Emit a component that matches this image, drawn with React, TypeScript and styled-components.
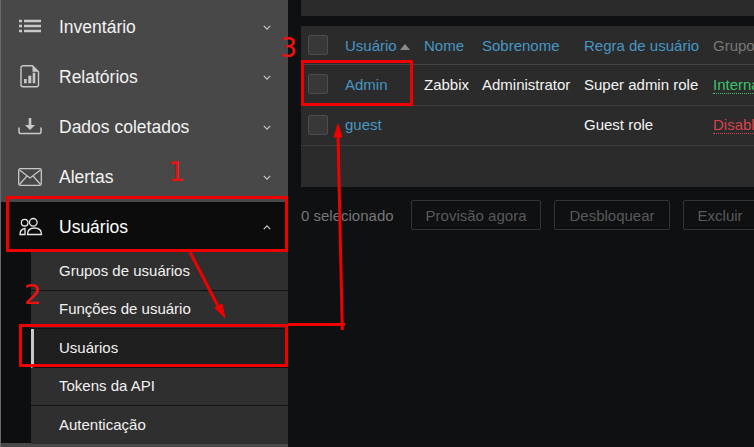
import React from 'react';
import styled, { createGlobalStyle } from 'styled-components';

const Global = createGlobalStyle`
  html, body { margin: 0; padding: 0; background: #0e1012; }
  body { width: 754px; height: 447px; overflow: hidden; font-family: "Liberation Sans", Arial, sans-serif; }
`;

const Page = styled.div`
  position: relative;
  width: 754px;
  height: 447px;
  display: flex;
  overflow: hidden;
  background: #0e1012;
`;

const Sidebar = styled.nav`
  width: 288px;
  height: 447px;
  border-left: 1px solid #6a6a6a;
  background: #484848;
  flex-shrink: 0;
  display: flex;
  flex-direction: column;
  padding-top: 2px;
  box-sizing: border-box;
`;

const MenuRow = styled.div<{ $open?: boolean }>`
  height: 50px;
  display: flex;
  align-items: center;
  flex-shrink: 0;
  padding: 0 17px 0 16px;
  color: ${(p) => (p.$open ? '#ffffff' : '#f2f2f2')};
  background: ${(p) => (p.$open ? '#0c0c0d' : 'transparent')};
`;

const MenuIcon = styled.svg`
  width: 26px;
  height: 26px;
  flex-shrink: 0;
  margin-right: 16px;
  fill: none;
  stroke: #c8c8c8;
`;

const MenuLabel = styled.span`
  flex: 1;
  font-size: 17.5px;
`;

const Chevron = styled.svg`
  width: 8px;
  height: 5px;
  fill: none;
  stroke: #c8c8c8;
  stroke-width: 1.5;
`;

const SubWrap = styled.div`
  background: #0c0e10;
  padding-left: 30px;
  height: 191px;
  flex-shrink: 0;
`;

const SubItem = styled.div<{ $active?: boolean }>`
  height: 36.5px;
  padding-bottom: 1px;
  display: flex;
  align-items: center;
  padding-left: ${(p) => (p.$active ? '25px' : '28px')};
  font-size: 15px;
  color: #f2f2f2;
  background: ${(p) => (p.$active ? '#1f1f1f' : '#2f2f2f')};
  border-bottom: 1px solid #111;
  border-left: ${(p) => (p.$active ? '3px solid #c8c8c8' : '0')};
  &:last-child { border-bottom: 0; height: 37px; }
`;

const Main = styled.main`
  flex: 1;
  min-width: 0;
  padding-left: 13px;
  display: flex;
  flex-direction: column;
`;

const TopPanel = styled.div`
  height: 16px;
  background: #2b2b2b;
  margin-bottom: 10px;
  flex-shrink: 0;
`;

const TablePanel = styled.div`
  height: 161px;
  background: #2b2b2b;
  flex-shrink: 0;
  overflow: hidden;
`;

const Row = styled.div<{ $head?: boolean }>`
  display: grid;
  grid-template-columns: 44px 79px 58px 102px 129px 200px;
  align-items: center;
  height: ${(p) => (p.$head ? '38px' : '38.5px')};
  padding-bottom: ${(p) => (p.$head ? '0' : '1px')};
  border-bottom: 1px solid ${(p) => (p.$head ? '#454545' : '#3c3c3c')};
  font-size: 15px;
  white-space: nowrap;
  color: #f4f4f4;
`;

const Check = styled.span`
  display: block;
  width: 18px;
  height: 18px;
  margin-left: 7px;
  background: #383838;
  border: 1px solid #4d4d4d;
  border-radius: 2px;
`;

const Link = styled.span`
  color: #4796c4;
`;

const SortArrow = styled.span`
  display: inline-block;
  margin-left: 3px;
  border-left: 5px solid transparent;
  border-right: 5px solid transparent;
  border-bottom: 6px solid #8a8a8a;
  vertical-align: 1px;
`;

const Muted = styled.span`
  color: #777;
`;

const Tag = styled.span<{ $color: string }>`
  color: ${(p) => p.$color};
  border-bottom: 1px dotted ${(p) => p.$color};
`;

const Actions = styled.div`
  display: flex;
  align-items: center;
  margin-top: 13px;
  font-size: 15px;
  color: #767676;
`;

const Count = styled.span`
  margin-right: 17px;
  flex-shrink: 0;
  white-space: nowrap;
`;

const ActionButton = styled.span`
  box-sizing: border-box;
  height: 30px;
  padding: 0 14px;
  margin-right: 13px;
  display: flex;
  align-items: center;
  flex-shrink: 0;
  border: 1px solid #333;
  border-radius: 2px;
  color: #5a5a5a;
  white-space: nowrap;
`;

const Overlay = styled.svg`
  position: absolute;
  left: 0;
  top: 0;
  width: 754px;
  height: 447px;
  pointer-events: none;
`;

const Mark = styled.span<{ $x: number; $y: number }>`
  position: absolute;
  left: ${(p) => p.$x}px;
  top: ${(p) => p.$y}px;
  font-family: "DejaVu Sans", sans-serif;
  font-size: 27px;
  line-height: 30px;
  color: #f01010;
`;

const ChevronDown = () => (
  <Chevron viewBox="0 0 10 6"><path d="M1 1l4 4 4-4" /></Chevron>
);

export default function App() {
  return (
    <Page>
      <Global />
      <Sidebar>
        <MenuRow>
          <MenuIcon viewBox="0 0 26 26" strokeWidth="2.6">
            <path d="M2 7h3M2 12h3M2 17h3M7 7h17M7 12h17M7 17h17" />
          </MenuIcon>
          <MenuLabel>Inventário</MenuLabel>
          <ChevronDown />
        </MenuRow>
        <MenuRow>
          <MenuIcon viewBox="0 0 26 26" strokeWidth="1.4">
            <path d="M6 1.700h9.500l6 6v13a2 2 0 0 1-2 2H6a2 2 0 0 1-2-2v-17a2 2 0 0 1 2-2z" />
            <path d="M15.500 1.700l6 6h-6z" fill="#c8c8c8" stroke="none" />
            <path d="M7 15h2.700v4.300H7zM11.300 11.700h3v7.600h-3zM15.700 8.700h2.600v10.600h-2.600z" fill="#c8c8c8" stroke="none" />
          </MenuIcon>
          <MenuLabel>Relatórios</MenuLabel>
          <ChevronDown />
        </MenuRow>
        <MenuRow>
          <MenuIcon viewBox="0 0 26 26" strokeWidth="1.5">
            <path d="M2 13.500v4.500a1.500 1.500 0 0 0 1.500 1.500h19a1.500 1.500 0 0 0 1.500-1.500v-4.500" />
            <path d="M13 4v8" strokeWidth="2.6" />
            <path d="M8 11h10l-5 5z" fill="#c8c8c8" stroke="none" />
          </MenuIcon>
          <MenuLabel>Dados coletados</MenuLabel>
          <ChevronDown />
        </MenuRow>
        <MenuRow>
          <MenuIcon viewBox="0 0 26 26" strokeWidth="1.3">
            <rect x="1.700" y="4.700" width="22.600" height="16.600" rx="1.500" />
            <path d="M2.500 6l10.500 8 10.500-8M2.500 20.500l7.500-8.700M23.500 20.500l-7.500-8.700" />
          </MenuIcon>
          <MenuLabel>Alertas</MenuLabel>
          <ChevronDown />
        </MenuRow>
        <MenuRow $open>
          <MenuIcon viewBox="0 0 26 26" strokeWidth="1.3" style={{ stroke: '#e8e8e8' }}>
            <circle cx="7.700" cy="8.700" r="3.300" />
            <circle cx="16.300" cy="8.300" r="3.800" />
            <path d="M10.500 20.500c0-4 2.500-6.500 7-6.500s7 2.500 7 6.500z" />
            <path d="M3 20.500c0-3 1.500-5.500 5-6L8 20.500z" />
          </MenuIcon>
          <MenuLabel>Usuários</MenuLabel>
          <Chevron viewBox="0 0 10 6"><path d="M1 5l4-4 4 4" /></Chevron>
        </MenuRow>
        <SubWrap>
          <SubItem>Grupos de usuários</SubItem>
          <SubItem>Funções de usuário</SubItem>
          <SubItem $active>Usuários</SubItem>
          <SubItem>Tokens da API</SubItem>
          <SubItem>Autenticação</SubItem>
        </SubWrap>
      </Sidebar>
      <Main>
        <TopPanel />
        <TablePanel>
          <Row $head>
            <Check />
            <Link>Usuário<SortArrow /></Link>
            <Link>Nome</Link>
            <Link>Sobrenome</Link>
            <Link>Regra de usuário</Link>
            <Muted>Grupos</Muted>
          </Row>
          <Row>
            <Check />
            <Link>Admin</Link>
            <span>Zabbix</span>
            <span>Administrator</span>
            <span>Super admin role</span>
            <span><Tag $color="#3dc46c">Internal</Tag></span>
          </Row>
          <Row>
            <Check />
            <Link>guest</Link>
            <span />
            <span />
            <span>Guest role</span>
            <span><Tag $color="#d8434b">Disabled</Tag></span>
          </Row>
        </TablePanel>
        <Actions>
          <Count>0 selecionado</Count>
          <ActionButton>Provisão agora</ActionButton>
          <ActionButton>Desbloquear</ActionButton>
          <ActionButton>Excluir</ActionButton>
        </Actions>
      </Main>
      <Overlay viewBox="0 0 754 447" fill="none" stroke="#f00000" strokeWidth="3">
        <rect x="7.500" y="197.500" width="279" height="53" />
        <rect x="20.500" y="325.500" width="266" height="40" />
        <rect x="302.500" y="61.500" width="109" height="43" />
        <path d="M190 252l31 60" />
        <path d="M225 318l-10-10 7-4z" fill="#f00000" strokeWidth="1" />
        <path d="M288 324.500h57" />
        <path d="M342.300 330l-4.300-196" />
        <path d="M338 124l-4 13h8z" fill="#f00000" strokeWidth="1" />
      </Overlay>
      <Mark $x={168} $y={157}>1</Mark>
      <Mark $x={24} $y={280}>2</Mark>
      <Mark $x={280} $y={33}>3</Mark>
    </Page>
  );
}
